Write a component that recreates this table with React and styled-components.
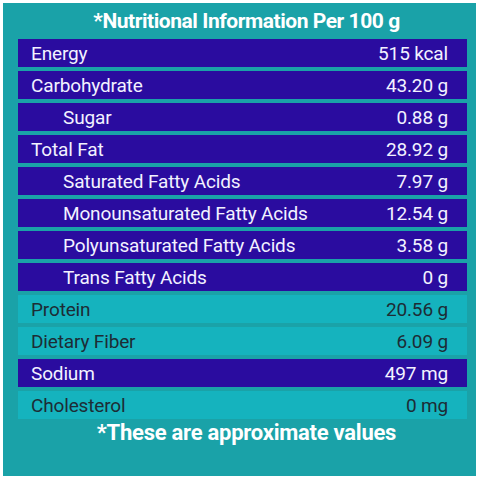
import React from 'react';
import styled, { createGlobalStyle } from 'styled-components';

// Nutrition rows, per 100 g
const nutrients = [
  { label: 'Energy', value: '515 kcal', tone: 'dark' },
  { label: 'Carbohydrate', value: '43.20 g', tone: 'dark' },
  { label: 'Sugar', value: '0.88 g', tone: 'dark', sub: true },
  { label: 'Total Fat', value: '28.92 g', tone: 'dark' },
  { label: 'Saturated Fatty Acids', value: '7.97 g', tone: 'dark', sub: true },
  { label: 'Monounsaturated Fatty Acids', value: '12.54 g', tone: 'dark', sub: true },
  { label: 'Polyunsaturated Fatty Acids', value: '3.58 g', tone: 'dark', sub: true },
  { label: 'Trans Fatty Acids', value: '0 g', tone: 'dark', sub: true },
  { label: 'Protein', value: '20.56 g', tone: 'light' },
  { label: 'Dietary Fiber', value: '6.09 g', tone: 'light' },
  { label: 'Sodium', value: '497 mg', tone: 'dark' },
  { label: 'Cholesterol', value: '0 mg', tone: 'light' },
];

const GlobalStyle = createGlobalStyle`
  body {
    margin: 0;
    background: #ffffff;
    font-family: Roboto, "Liberation Sans", sans-serif;
  }
`;

const App = () => {
  return (
    <>
      <GlobalStyle />
      <Panel>
        <Title>*Nutritional Information Per 100 g</Title>
        <Table>
          {nutrients.map((item) => (
            <Row key={item.label} tone={item.tone}>
              <Label sub={item.sub}>{item.label}</Label>
              <Value>{item.value}</Value>
            </Row>
          ))}
        </Table>
        <Footer>*These are approximate values</Footer>
      </Panel>
    </>
  );
};

const Panel = styled.div`
  box-sizing: border-box;
  width: 473px;
  height: 473px;
  margin: 3px;
  padding: 0 9px 0 15px;
  background-color: #1aa2a8;
  display: flex;
  flex-direction: column;
`;

const Title = styled.h1`
  margin: 0;
  height: 36px;
  line-height: 36px;
  text-align: center;
  color: #ffffff;
  font-size: 21px;
  font-weight: 700;
  letter-spacing: -0.45px;
  padding-left: 8px;
`;

const Table = styled.div`
  display: flex;
  flex-direction: column;
  gap: 4px;
`;

const Row = styled.div`
  height: 28px;
  display: flex;
  align-items: center;
  justify-content: space-between;
  padding: 0 19px 0 13px;
  font-size: 19px;
  letter-spacing: -0.15px;
  background-color: ${(props) => (props.tone === 'light' ? '#15b3be' : '#2a0c9f')};
  color: ${(props) => (props.tone === 'light' ? '#1d2c35' : '#f2f2ff')};
`;

const Label = styled.span`
  padding-left: ${(props) => (props.sub ? '32px' : '0')};
`;

const Value = styled.span`
  text-align: right;
`;

const Footer = styled.div`
  height: 28px;
  line-height: 28px;
  text-align: center;
  color: #ffffff;
  font-size: 22px;
  font-weight: 700;
  letter-spacing: -0.25px;
  padding-left: 8px;
`;

export default App;
